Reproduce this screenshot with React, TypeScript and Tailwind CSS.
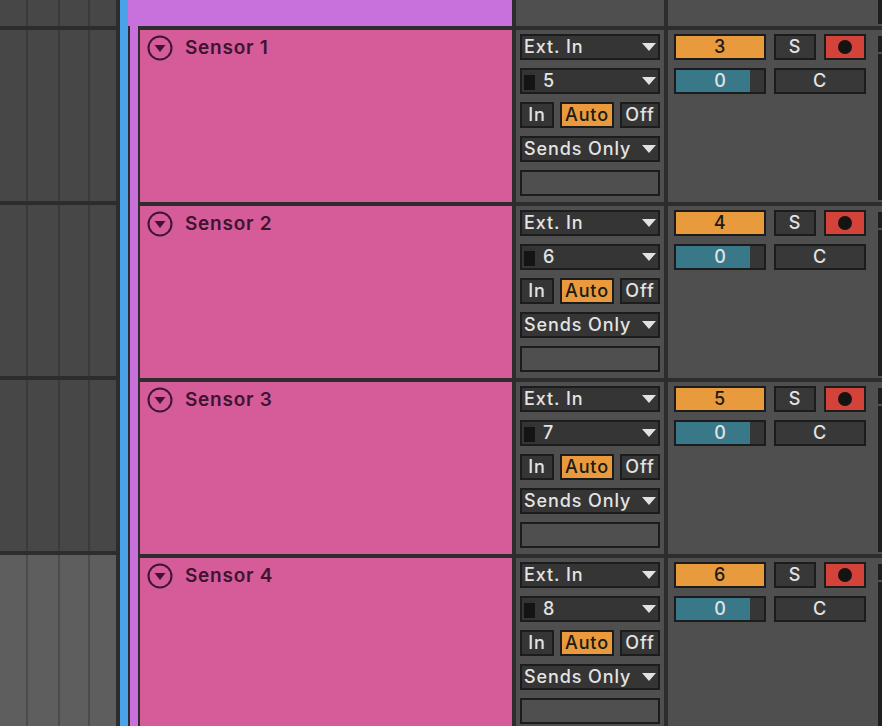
import React from "react";

const tracks = [
  { name: "Sensor 1", input: "5", num: "3" },
  { name: "Sensor 2", input: "6", num: "4" },
  { name: "Sensor 3", input: "7", num: "5" },
  { name: "Sensor 4", input: "8", num: "6" },
];

const font = { fontFamily: "Inter, 'Open Sans', sans-serif" };

const Arrow = () => (
  <svg width="14" height="8" viewBox="0 0 14 8" className="shrink-0">
    <path d="M0 0 L14 0 L7 8 Z" fill="#e2e2e2" />
  </svg>
);

const FoldIcon = () => (
  <svg width="26" height="26" viewBox="0 0 26 26" className="shrink-0">
    <circle cx="13" cy="13" r="11.5" fill="none" stroke="#3d1431" strokeWidth="2" />
    <path d="M7.5 10 L18.5 10 L13 17 Z" fill="#3d1431" />
  </svg>
);

// left arrangement grid cell
const GridCell: React.FC<{ h: string; light?: boolean }> = ({ h, light }) => (
  <div className={`flex gap-[2px] ${h} ${light ? "bg-[#4b4b4b]" : "bg-[#3a3a3a]"}`}>
    {["w-[26px]", "w-[30px]", "w-[28px]", "w-[26px]"].map((w, i) => (
      <div key={i} className={`${w} ${light ? "bg-[#5e5e5e]" : "bg-[#474747]"}`} />
    ))}
  </div>
);

const Box: React.FC<{ className?: string; children?: React.ReactNode }> = ({ className = "", children }) => (
  <div
    className={`flex h-[26px] items-center border-2 border-[#1c1c1c] text-[18px] leading-none tracking-[0.05em] ${className}`}
  >
    {children}
  </div>
);

const IoColumn: React.FC<{ input: string }> = ({ input }) => (
  <div className="flex w-[148px] shrink-0 flex-col gap-[8px] bg-[#4f4f4f] px-[4px] pt-[4px] text-[#e3e3e3]">
    <Box className="justify-between bg-[#353535] pl-[2px] pr-[2px] font-medium">
      <span>Ext. In</span>
      <Arrow />
    </Box>
    <Box className="justify-between bg-[#353535] pl-[1px] pr-[2px] font-medium">
      <div className="flex items-center gap-[8px]">
        <div className="ml-[1px] flex h-[18px] w-[11px] flex-col bg-[#141414]">
          <div className="h-[3px] bg-[#333333]" />
        </div>
        <span>{input}</span>
      </div>
      <Arrow />
    </Box>
    <div className="flex gap-[6px]">
      <Box className="w-[34px] justify-center bg-[#353535] font-medium">In</Box>
      <Box className="w-[54px] justify-center bg-[#e89a3c] font-medium text-[#1a1a1a]">Auto</Box>
      <Box className="w-[40px] justify-center bg-[#353535] font-medium">Off</Box>
    </div>
    <Box className="justify-between bg-[#353535] pl-[2px] pr-[2px] font-medium">
      <span>Sends Only</span>
      <Arrow />
    </Box>
    <Box className="bg-[#4f4f4f]" />
  </div>
);

const MixerColumn: React.FC<{ num: string }> = ({ num }) => (
  <div className="flex flex-1 bg-[#4f4f4f] pl-[6px] pt-[4px] text-[#e3e3e3]">
    <div className="flex flex-col gap-[8px]">
      <div className="flex gap-[8px]">
        <Box className="w-[92px] justify-center bg-[#e89a3c] font-medium text-[#1a1a1a]">{num}</Box>
        <Box className="w-[42px] justify-center bg-[#383838] font-medium">S</Box>
        <Box className="w-[42px] justify-center bg-[#d3433a]">
          <div className="h-[14px] w-[14px] rounded-full bg-[#141414]" />
        </Box>
      </div>
      <div className="flex gap-[8px]">
        <div className="relative flex h-[26px] w-[92px] items-center justify-center border-2 border-[#1c1c1c] bg-[#363636]">
          <div className="absolute inset-y-0 left-0 w-[74px] bg-[#397888]" />
          <span className="relative text-[18px] font-medium leading-none text-[#e3e3e3]">0</span>
        </div>
        <Box className="w-[92px] justify-center bg-[#383838] font-medium">C</Box>
      </div>
    </div>
    <div className="ml-auto my-[2px] flex w-[4px] flex-col bg-[#1e1e1e]">
      <div className="mt-[16px] h-[2px] bg-[#4f4f4f]" />
    </div>
  </div>
);

const TrackRow: React.FC<{ name: string; input: string; num: string }> = ({ name, input, num }) => (
  <div className="flex h-[172px] shrink-0 gap-[4px] bg-[#2d2d2d] pl-[2px]">
    <div className="flex w-[372px] shrink-0 items-start gap-[12px] bg-[#d55c99] pl-[7px] pt-[5px]">
      <FoldIcon />
      <span className="-mt-[1px] text-[19px] font-semibold tracking-[0.04em] text-[#3d1431]">{name}</span>
    </div>
    <IoColumn input={input} />
    <MixerColumn num={num} />
  </div>
);

const App: React.FC = () => {
  return (
    <div className="flex h-[726px] w-[882px] overflow-hidden bg-[#2d2d2d]" style={font}>
      {/* arrangement grid */}
      <div className="flex w-[116px] shrink-0 flex-col gap-[4px] bg-[#2d2d2d]">
        <GridCell h="h-[26px]" />
        <GridCell h="h-[172px]" />
        <GridCell h="h-[172px]" />
        <GridCell h="h-[172px]" />
        <GridCell h="h-[172px]" light />
      </div>
      <div className="w-[4px] shrink-0 bg-[#2d2d2d]" />
      <div className="w-[8px] shrink-0 bg-[#4aa3e8]" />

      <div className="flex flex-1 flex-col">
        {/* group header */}
        <div className="flex h-[26px] shrink-0 gap-[4px] bg-[#2d2d2d]">
          <div className="w-[384px] bg-[#c870dc]" />
          <div className="w-[148px] bg-[#4f4f4f]" />
          <div className="flex flex-1 bg-[#4f4f4f]">
            <div className="ml-auto mb-[2px] w-[4px] bg-[#1e1e1e]" />
          </div>
        </div>
        <div className="flex flex-1">
          <div className="w-[2px] shrink-0 bg-[#2d2d2d]" />
          <div className="w-[8px] shrink-0 bg-[#c870dc]" />
          <div className="flex flex-1 flex-col gap-[4px] bg-[#2d2d2d] pt-[4px]">
            {tracks.map((t) => (
              <TrackRow key={t.name} {...t} />
            ))}
          </div>
        </div>
      </div>
    </div>
  );
};

export default App;
